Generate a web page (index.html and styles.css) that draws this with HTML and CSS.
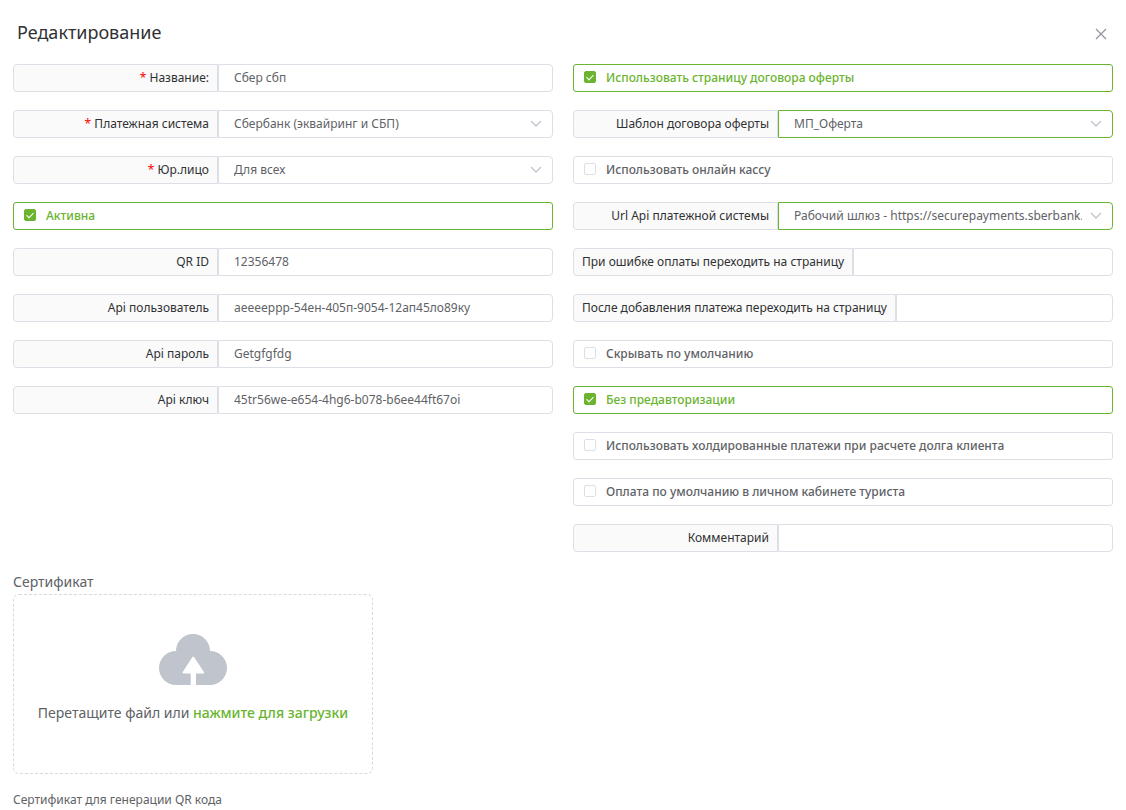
FILE: index.html
```
<!DOCTYPE html>
<html lang="ru">
<head>
  <meta charset="UTF-8">
  <meta name="viewport" content="width=device-width, initial-scale=1.0">
  <title>Редактирование</title>
  <link rel="stylesheet" href="styles.css">
</head>

<body>
  <form class="dialog">
    <header class="dialog-header">
      <h1>Редактирование</h1>
      <button type="button" class="close" aria-label="Закрыть">
        <svg width="12" height="12" viewBox="0 0 12 12"><path d="M1 1l10 10M11 1L1 11"/></svg>
      </button>
    </header>

    <div class="columns">
      <div class="column">
        <div class="field">
          <label for="name"><span class="required">*</span> Название:</label>
          <input type="text" id="name" value="Сбер сбп">
        </div>
        <div class="field">
          <label for="system"><span class="required">*</span> Платежная система</label>
          <div class="select">
            <select id="system"><option>Сбербанк (эквайринг и СБП)</option></select>
            <svg class="arrow" width="12" height="8" viewBox="0 0 12 8"><path d="M1 1l5 5 5-5"/></svg>
          </div>
        </div>
        <div class="field">
          <label for="company"><span class="required">*</span> Юр.лицо</label>
          <div class="select">
            <select id="company"><option>Для всех</option></select>
            <svg class="arrow" width="12" height="8" viewBox="0 0 12 8"><path d="M1 1l5 5 5-5"/></svg>
          </div>
        </div>
        <label class="check"><input type="checkbox" checked><span>Активна</span></label>
        <div class="field">
          <label for="qr">QR ID</label>
          <input type="text" id="qr" value="12356478">
        </div>
        <div class="field">
          <label for="user">Api пользователь</label>
          <input type="text" id="user" value="aeeeeppp-54ен-405п-9054-12ап45ло89ку">
        </div>
        <div class="field">
          <label for="password">Api пароль</label>
          <input type="text" id="password" value="Getgfgfdg">
        </div>
        <div class="field">
          <label for="key">Api ключ</label>
          <input type="text" id="key" value="45tr56we-e654-4hg6-b078-b6ee44ft67oi">
        </div>
      </div>

      <div class="column">
        <label class="check"><input type="checkbox" checked><span>Использовать страницу договора оферты</span></label>
        <div class="field">
          <label for="template">Шаблон договора оферты</label>
          <div class="select active">
            <select id="template"><option>МП_Оферта</option></select>
            <svg class="arrow" width="12" height="8" viewBox="0 0 12 8"><path d="M1 1l5 5 5-5"/></svg>
          </div>
        </div>
        <label class="check"><input type="checkbox"><span>Использовать онлайн кассу</span></label>
        <div class="field">
          <label for="url">Url Api платежной системы</label>
          <div class="select active">
            <select id="url"><option>Рабочий шлюз - https://securepayments.sberbank.ru</option></select>
            <svg class="arrow" width="12" height="8" viewBox="0 0 12 8"><path d="M1 1l5 5 5-5"/></svg>
          </div>
        </div>
        <div class="field">
          <label for="fail">При ошибке оплаты переходить на страницу</label>
          <input type="text" id="fail">
        </div>
        <div class="field">
          <label for="success">После добавления платежа переходить на страницу</label>
          <input type="text" id="success">
        </div>
        <label class="check"><input type="checkbox"><span>Скрывать по умолчанию</span></label>
        <label class="check"><input type="checkbox" checked><span>Без предавторизации</span></label>
        <label class="check"><input type="checkbox"><span>Использовать холдированные платежи при расчете долга клиента</span></label>
        <label class="check"><input type="checkbox"><span>Оплата по умолчанию в личном кабинете туриста</span></label>
        <div class="field">
          <label for="comment">Комментарий</label>
          <input type="text" id="comment">
        </div>
      </div>
    </div>

    <section class="upload">
      <h2>Сертификат</h2>
      <div class="dropzone">
        <svg width="68" height="51" viewBox="0 0 68 51">
          <path fill="#c0c4cc" d="M17 51a17 17 0 0 1 0-34a17 17 0 0 1 34 0a17 17 0 0 1 0 34H37V39.500h7.200c.9 0 1.200-.8.700-1.500L35.200 23.200c-.5-.8-1.400-.8-1.900 0L23.700 38c-.5.700-.1 1.500.8 1.500h7.200V51z"/>
        </svg>
        <p>Перетащите файл или <a href="#">нажмите для загрузки</a></p>
      </div>
      <p class="caption">Сертификат для генерации QR кода</p>
    </section>
  </form>
</body>
</html>
```
FILE: styles.css
```
* {
  box-sizing: border-box;
}

body {
  margin: 0;
  background: #fff;
  color: #606266;
  font-family: "Noto Sans", "Open Sans", sans-serif;
  font-size: 12px;
}

h1, h2, p {
  margin: 0;
  font-weight: normal;
}

.dialog {
  padding: 20px 13px 0;
}

.dialog-header {
  display: flex;
  justify-content: space-between;
  align-items: center;
  height: 24px;
  padding: 0 6px 0 4px;
  margin-bottom: 20px;
}

.dialog-header h1 {
  color: #303133;
  font-size: 18px;
  line-height: 24px;
}

.close {
  display: flex;
  padding: 4px 0 0;
  border: 0;
  background: none;
  cursor: pointer;
}

.close path {
  fill: none;
  stroke: #909399;
  stroke-width: 1.2;
}

.columns {
  display: grid;
  grid-template-columns: 1fr 1fr;
  gap: 20px;
}

.column {
  display: flex;
  flex-direction: column;
  gap: 18px;
  min-width: 0;
}

.field {
  display: flex;
  height: 28px;
}

.field > label {
  flex: none;
  min-width: 205px;
  padding: 0 8px;
  border: 1px solid #dcdfe6;
  border-radius: 4px 0 0 4px;
  background: #fafafa;
  color: #303133;
  line-height: 26px;
  text-align: right;
}

.required {
  color: #f00;
}

.field input,
.field select {
  flex: 1;
  width: 100%;
  min-width: 0;
  height: 28px;
  padding: 0 15px 2px;
  border: 1px solid #dcdfe6;
  border-radius: 0 4px 4px 0;
  outline: none;
  background: #fff;
  color: #606266;
  font: inherit;
}

.select {
  position: relative;
  flex: 1;
  min-width: 0;
}

.field select {
  appearance: none;
  padding-right: 30px;
}

.select.active select {
  border-color: #6ab42f;
}

.arrow {
  position: absolute;
  top: 10px;
  right: 11px;
  pointer-events: none;
}

.arrow path {
  fill: none;
  stroke: #c0c4cc;
  stroke-width: 1.3;
}

.check {
  display: flex;
  align-items: center;
  gap: 10px;
  height: 28px;
  padding: 0 10px;
  border: 1px solid #dcdfe6;
  border-radius: 3px;
  font-weight: 500;
  line-height: 26px;
}

.check input {
  appearance: none;
  display: grid;
  place-items: center;
  width: 12px;
  height: 12px;
  margin: 0 0 2px;
  border: 1px solid #dcdfe6;
  border-radius: 2px;
}

.check:has(input:checked) {
  border-color: #6ab42f;
  color: #6ab42f;
}

.check input:checked {
  border-color: #6ab42f;
  background: #6ab42f;
}

.check input:checked::after {
  content: "";
  width: 3px;
  height: 6px;
  margin-bottom: 2px;
  border: solid #fff;
  border-width: 0 1px 1px 0;
  transform: rotate(45deg);
}

.upload {
  margin-top: 20px;
}

.upload h2 {
  padding-bottom: 2px;
  font-size: 14px;
  line-height: 20px;
}

.dropzone {
  display: flex;
  flex-direction: column;
  align-items: center;
  gap: 16px;
  max-width: 360px;
  height: 180px;
  padding-top: 39px;
  border: 1px dashed #d9d9d9;
  border-radius: 6px;
  font-size: 14px;
  line-height: 24px;
}

.dropzone a {
  color: #6ab42f;
  font-weight: 500;
  text-decoration: none;
}

.caption {
  margin-top: 16px;
  line-height: 20px;
}
```
